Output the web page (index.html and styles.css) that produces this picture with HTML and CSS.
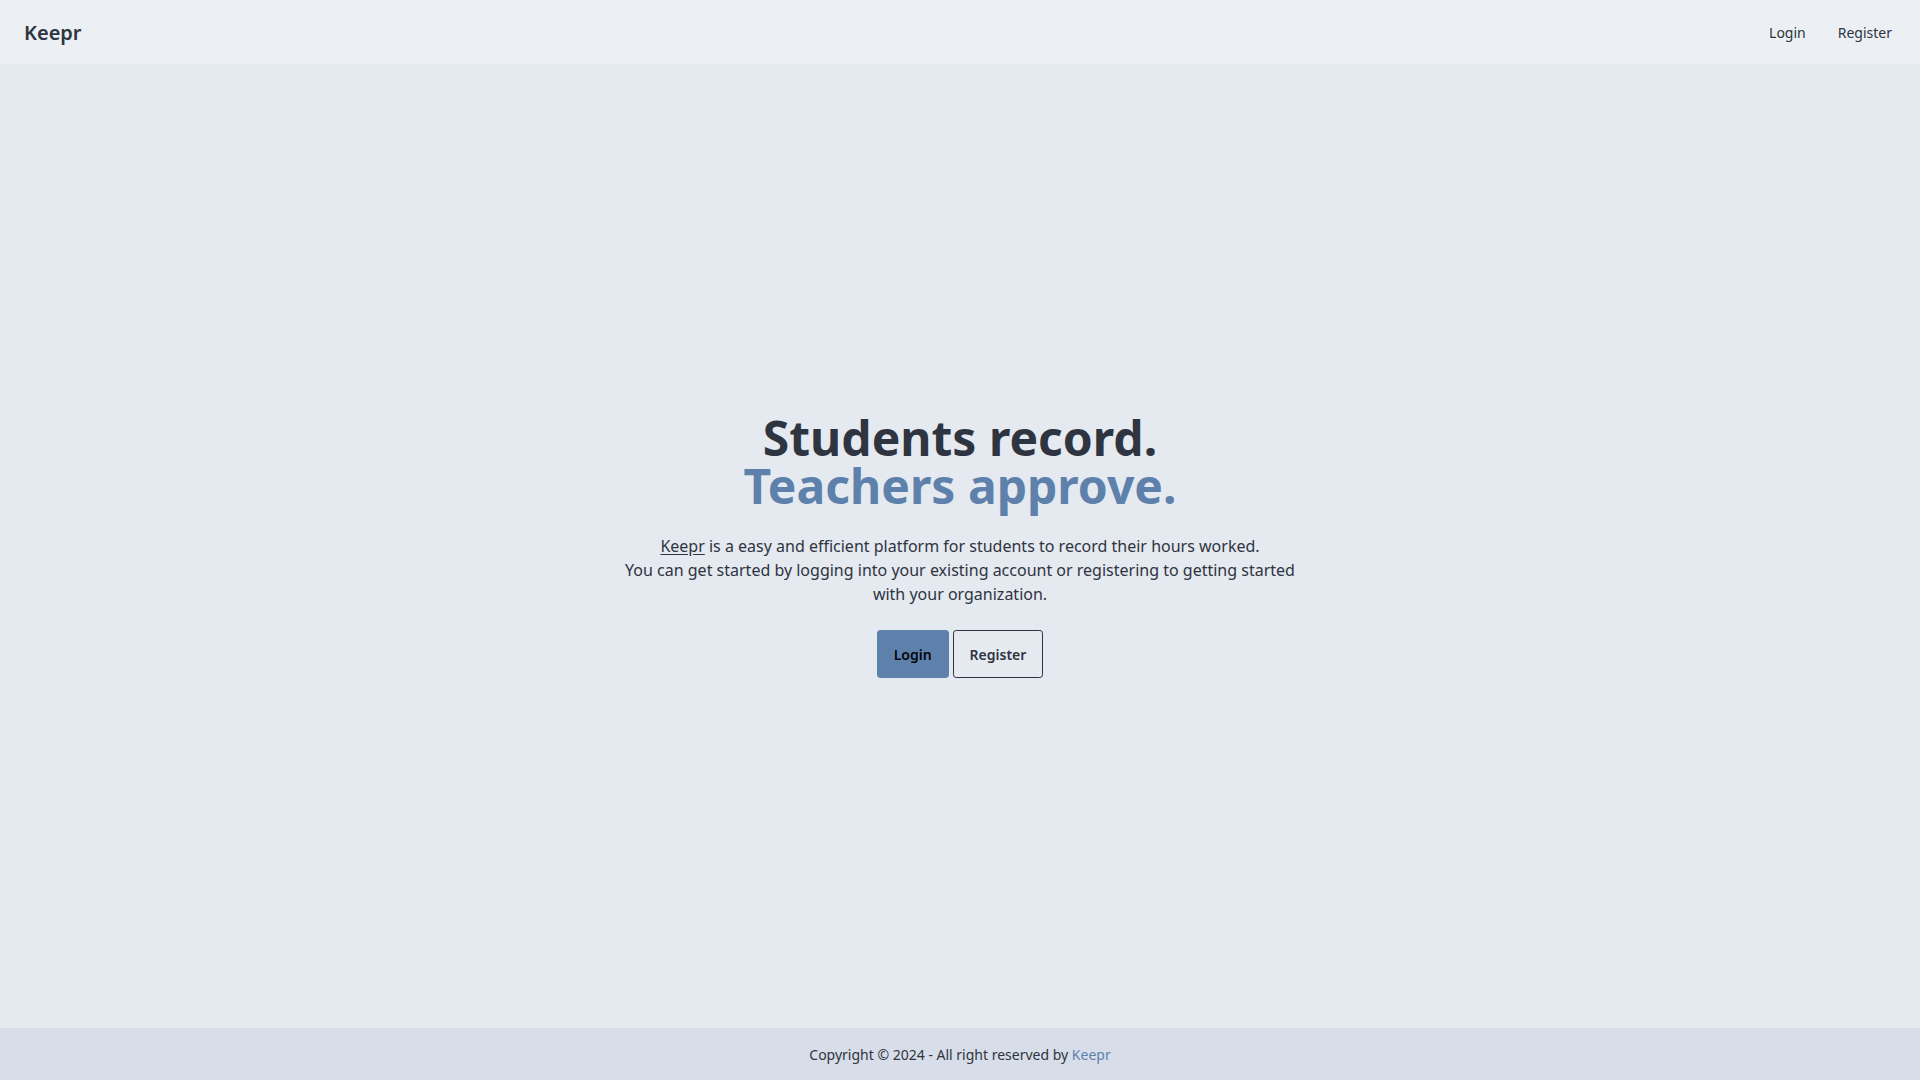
FILE: index.html
```html
<!DOCTYPE html>
<html lang="en">
<head>
<meta charset="utf-8">
<title>Keepr</title>
<link rel="stylesheet" href="styles.css">
</head>
<body>
<header class="navbar">
  <a class="brand" href="#">Keepr</a>
  <nav class="menu">
    <a class="menu-item" href="#">Login</a>
    <a class="menu-item" href="#">Register</a>
  </nav>
</header>
<main class="hero">
  <div class="hero-content">
    <h1 class="title">Students record.<br><span class="accent">Teachers approve.</span></h1>
    <p class="lead"><a class="inline-link" href="#">Keepr</a> is a easy and efficient platform for students to record their hours worked.<br>You can get started by logging into your existing account or registering to getting started with your organization.</p>
    <div class="actions">
      <a class="btn btn-primary" href="#">Login</a>
      <a class="btn btn-outline" href="#">Register</a>
    </div>
  </div>
</main>
<footer class="footer">
  <p>Copyright © 2024 - All right reserved by <a class="footer-link" href="#">Keepr</a></p>
</footer>
</body>
</html>
```
FILE: styles.css
```css
* { box-sizing: border-box; }
html, body { margin: 0; padding: 0; }
body {
  font-family: "Noto Sans", "Open Sans", sans-serif;
  color: #2e3440;
  background: #e5e9f0;
  min-height: 100vh;
  display: flex;
  flex-direction: column;
  font-size: 16px;
  line-height: 1.5;
}
a { color: inherit; text-decoration: none; }
.navbar {
  display: flex;
  align-items: center;
  justify-content: space-between;
  min-height: 64px;
  padding: 9px 8px 7px;
  background: #eceff4;
}
.brand {
  display: flex;
  align-items: center;
  height: 48px;
  padding: 0 16px;
  font-size: 20px;
  font-weight: 600;
  line-height: 28px;
}
.menu {
  display: flex;
  padding: 0 4px;
}
.menu-item {
  padding: 8px 16px;
  font-size: 14px;
  line-height: 20px;
}
.hero {
  flex: 1;
  display: flex;
  align-items: center;
  justify-content: center;
  padding: 16px;
}
.hero-content {
  max-width: 672px;
  text-align: center;
}
.title {
  margin: 0;
  font-size: 48px;
  line-height: 1;
  font-weight: 700;
}
.accent { color: #5e81ac; }
.lead {
  margin: 0;
  padding: 24px 0;
}
.inline-link { text-decoration: underline; text-underline-offset: 2px; }
.actions {
  display: flex;
  justify-content: center;
  gap: 4px;
}
.btn {
  display: inline-flex;
  align-items: center;
  justify-content: center;
  height: 48px;
  padding: 0 16px;
  font-size: 14px;
  font-weight: 600;
  border-radius: 3.2px;
  border: 1px solid transparent;
}
.btn-primary {
  background: #5e81ac;
  border-color: #5e81ac;
  color: #03060b;
}
.btn-outline {
  background: transparent;
  border-color: #2e3440;
  color: #2e3440;
}
.footer {
  background: #d8dee9;
  padding: 17px 16px 15px;
  text-align: center;
  font-size: 14px;
  line-height: 20px;
}
.footer p { margin: 0; }
.footer-link { color: #5e81ac; }
```
